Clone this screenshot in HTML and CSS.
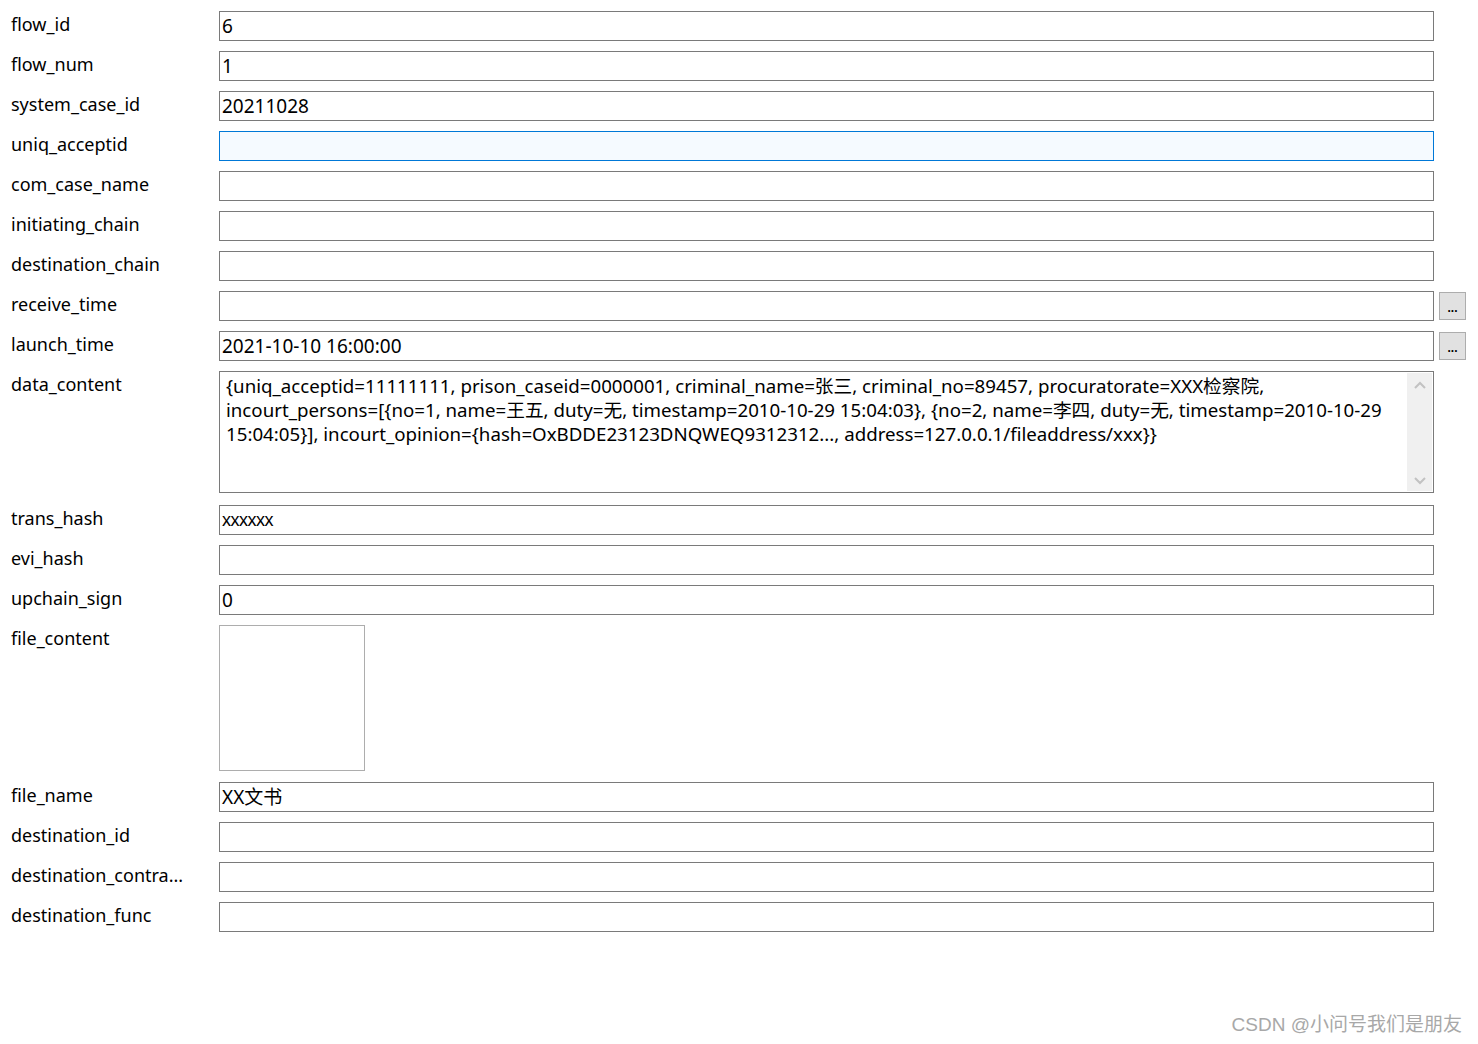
FILE: index.html
```html
<!DOCTYPE html>
<html lang="zh-CN">
<head>
    <meta charset="UTF-8">
    <title>flow record</title>
    <link rel="stylesheet" href="styles.css">
</head>
<body>
    <div class="form">
        <label class="name">flow_id</label>
        <div class="field">6</div>
        <div></div>

        <label class="name">flow_num</label>
        <div class="field">1</div>
        <div></div>

        <label class="name">system_case_id</label>
        <div class="field">20211028</div>
        <div></div>

        <label class="name">uniq_acceptid</label>
        <div class="field focused"></div>
        <div></div>

        <label class="name">com_case_name</label>
        <div class="field"></div>
        <div></div>

        <label class="name">initiating_chain</label>
        <div class="field"></div>
        <div></div>

        <label class="name">destination_chain</label>
        <div class="field"></div>
        <div></div>

        <label class="name">receive_time</label>
        <div class="field"></div>
        <div><button class="pick">...</button></div>

        <label class="name">launch_time</label>
        <div class="field">2021-10-10 16:00:00</div>
        <div><button class="pick">...</button></div>

        <label class="name">data_content</label>
        <div class="field memo">
            <div class="memo-text">{uniq_acceptid=11111111, prison_caseid=0000001, criminal_name=张三, criminal_no=89457, procuratorate=XXX检察院, incourt_persons=[{no=1, name=王五, duty=无, timestamp=2010-10-29 15:04:03}, {no=2, name=李四, duty=无, timestamp=2010-10-29 15:04:05}], incourt_opinion={hash=OxBDDE23123DNQWEQ9312312..., address=127.0.0.1/fileaddress/xxx}}</div>
            <div class="scrollbar">
                <svg width="12" height="8" viewBox="0 0 12 8"><path d="M1 7 L6 2 L11 7" fill="none" stroke="#c2c2c2" stroke-width="2"/></svg>
                <svg width="12" height="8" viewBox="0 0 12 8"><path d="M1 1 L6 6 L11 1" fill="none" stroke="#c2c2c2" stroke-width="2"/></svg>
            </div>
        </div>
        <div></div>

        <label class="name">trans_hash</label>
        <div class="field plain">xxxxxx</div>
        <div></div>

        <label class="name">evi_hash</label>
        <div class="field"></div>
        <div></div>

        <label class="name">upchain_sign</label>
        <div class="field">0</div>
        <div></div>

        <label class="name">file_content</label>
        <div class="picture-cell"><div class="picture"></div></div>
        <div></div>

        <label class="name">file_name</label>
        <div class="field">XX文书</div>
        <div></div>

        <label class="name">destination_id</label>
        <div class="field"></div>
        <div></div>

        <label class="name">destination_contra...</label>
        <div class="field"></div>
        <div></div>

        <label class="name">destination_func</label>
        <div class="field"></div>
        <div></div>
    </div>

    <div class="watermark">CSDN @小问号我们是朋友</div>
</body>
</html>
```

FILE: styles.css
```css
* {
    margin: 0;
    padding: 0;
    box-sizing: border-box;
}
body {
    font-family: "Noto Sans", "Noto Sans CJK SC", sans-serif;
    font-size: 18px;
    color: #000;
    background: #fff;
    height: 100vh;
    overflow: hidden;
    position: relative;
}
.form {
    display: grid;
    grid-template-columns: 219px 1215px 40px;
    row-gap: 10px;
    padding-top: 11px;
}
.name {
    padding-left: 11px;
    line-height: 24px;
    margin-top: 1px;
    font-size: 18px;
    white-space: nowrap;
}
.field {
    height: 30px;
    border: 1px solid #7a7a7a;
    padding-left: 2px;
    line-height: 28px;
    font-size: 19px;
}
.field.focused {
    border-color: #0078d7;
    background-color: #f5faff;
}
.field.plain {
    font-family: "Liberation Sans", sans-serif;
    font-size: 18px;
    letter-spacing: -0.5px;
}
.pick {
    margin-left: 5px;
    margin-top: 1px;
    width: 27px;
    height: 28px;
    background-color: #e1e1e1;
    border: 1px solid #adadad;
    font-family: "Liberation Sans", sans-serif;
    font-size: 12px;
    font-weight: bold;
    line-height: 30px;
    color: #000;
}
.memo {
    height: 122px;
    margin-bottom: 2px;
    display: flex;
    padding-left: 0;
    font-size: 18.7px;
}
.memo-text {
    flex: 1;
    padding: 2px 10px 0 6px;
    line-height: 24px;
}
.scrollbar {
    width: 25px;
    background-color: #f0f0f0;
    margin: 1px 1px 1px 0;
    display: flex;
    flex-direction: column;
    justify-content: space-between;
    align-items: center;
    padding: 8px 0 6px;
}
.picture-cell {
    padding-bottom: 1px;
}
.picture {
    width: 146px;
    height: 146px;
    border: 1px solid #adadad;
}
.watermark {
    position: absolute;
    right: 16px;
    bottom: 8px;
    font-family: "Liberation Sans", "Noto Sans CJK SC", sans-serif;
    font-size: 19px;
    color: #a8a8a8;
}
```
